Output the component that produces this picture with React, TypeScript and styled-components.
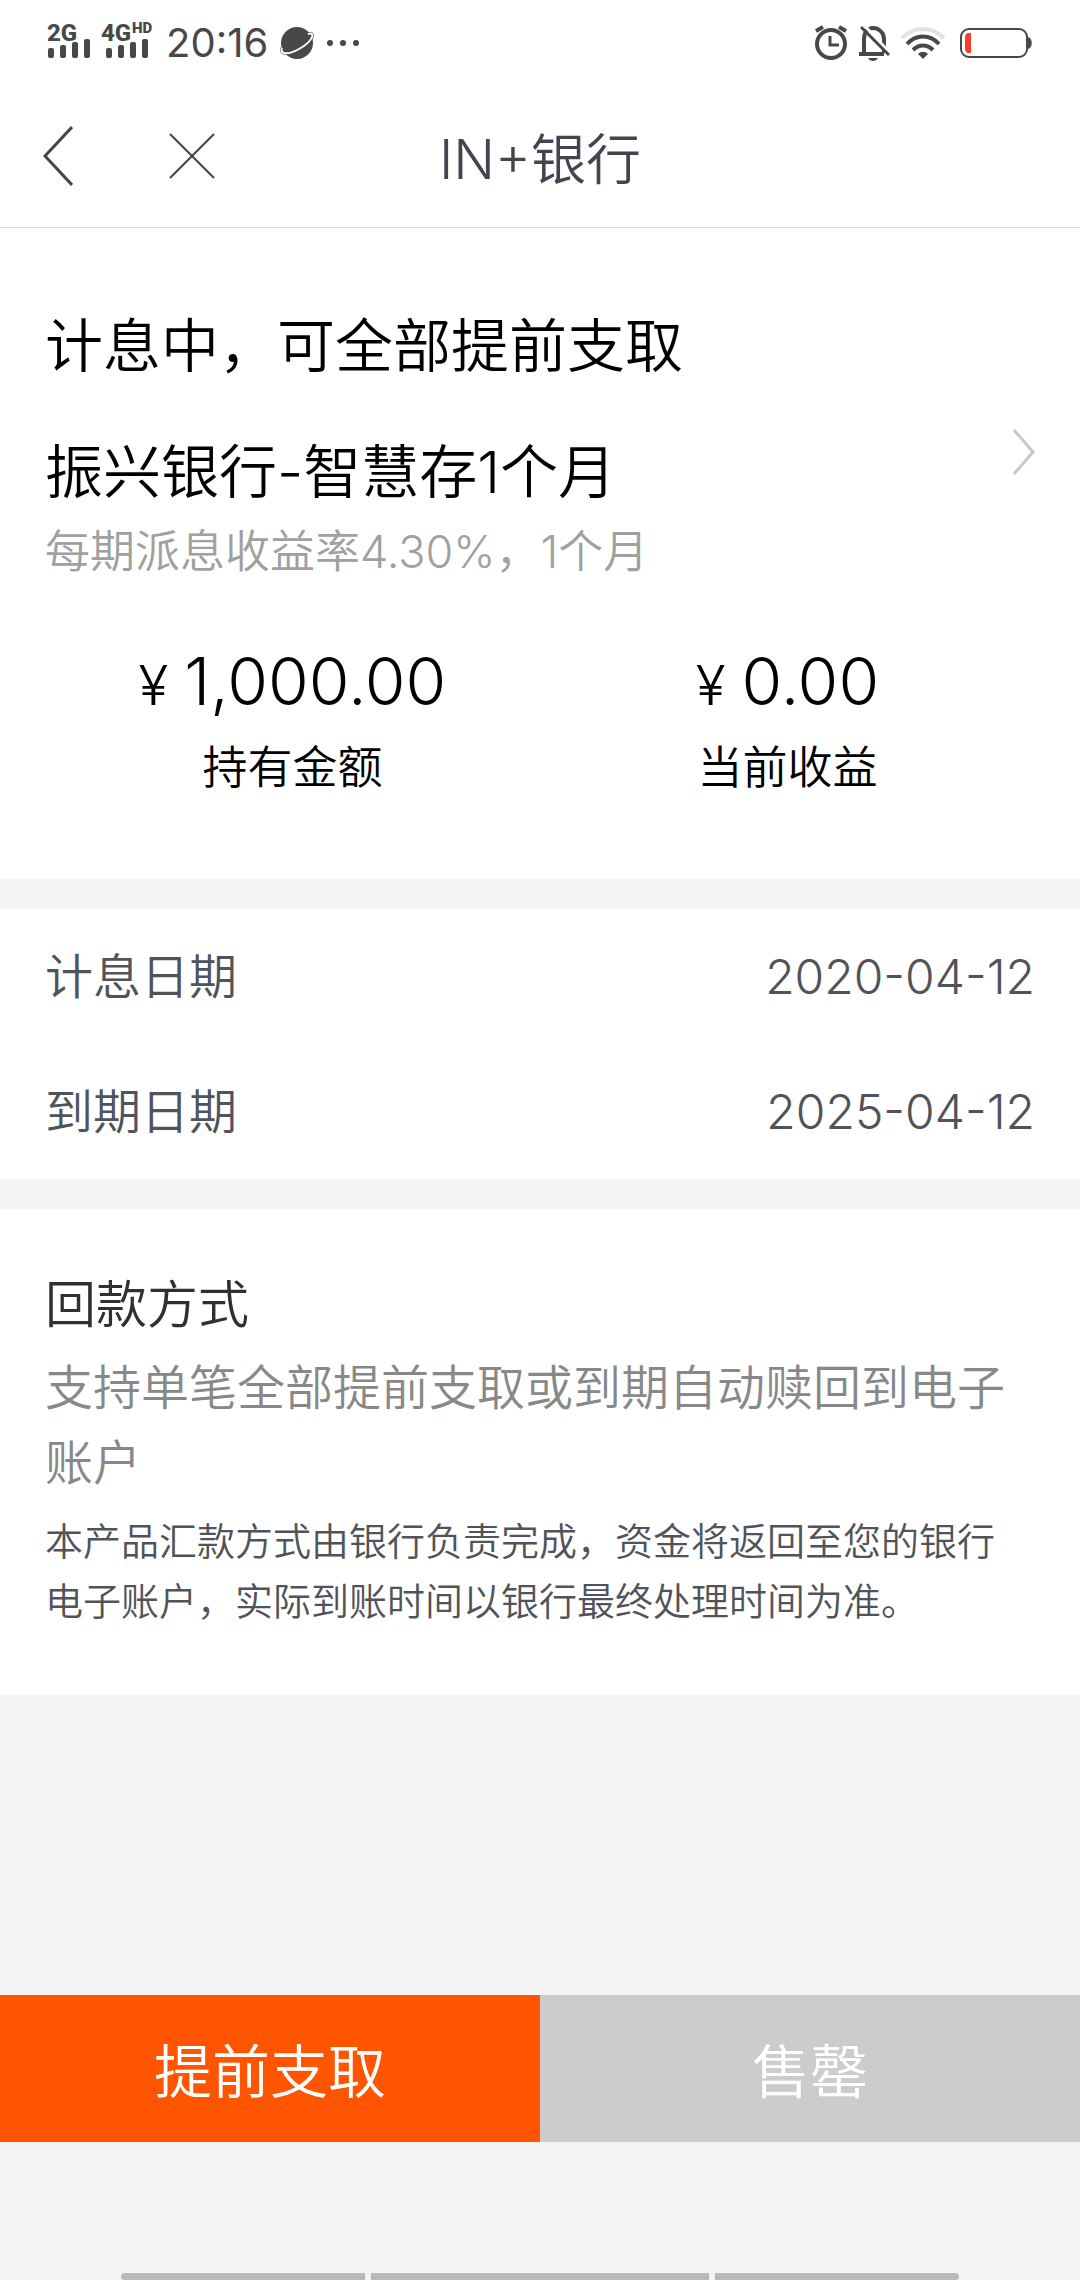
import React from 'react';
import styled, { createGlobalStyle } from 'styled-components';

const GlobalStyle = createGlobalStyle`
  * { box-sizing: border-box; }
  body {
    margin: 0;
    background: #f4f4f4;
    font-family: Inter, "Noto Sans CJK SC", sans-serif;
    font-weight: 350;
  }
  h1, h2, p, dl, dt, dd { margin: 0; font-weight: inherit; }
`;

const Page = styled.div`
  display: flex;
  flex-direction: column;
  min-height: 100vh;
`;

const StatusBar = styled.div`
  display: flex;
  align-items: center;
  justify-content: space-between;
  height: 86px;
  padding: 0 48px;
  background: #fff;
  color: #484848;
`;

const StatusGroup = styled.div<{ $gap: number }>`
  display: flex;
  align-items: center;
  gap: ${(p) => p.$gap}px;
`;

const SignalIcon = styled.svg`
  margin: 0 -2px;
`;

const Clock = styled.time`
  font-size: 40px;
  line-height: 48px;
  font-weight: 400;
`;

const NavBar = styled.header`
  display: grid;
  grid-template-columns: 1fr auto 1fr;
  align-items: center;
  height: 142px;
  padding: 0 43px;
  background: #fff;
  border-bottom: 1px solid #dcdcdc;
  color: #44434f;
`;

const NavActions = styled.div`
  display: flex;
  gap: 96px;
  padding-bottom: 2px;
`;

const IconButton = styled.button`
  display: flex;
  align-items: center;
  padding: 0;
  border: 0;
  background: none;
  color: inherit;
`;

const NavTitle = styled.h1`
  padding-top: 4px;
  font-size: 55px;
  line-height: 84px;
`;

const Content = styled.main`
  display: flex;
  flex-direction: column;
  gap: 30px;
`;

const Card = styled.section`
  padding: 0 45px;
  background: #fff;
`;

const SummaryCard = styled(Card)`
  padding-top: 76px;
  padding-bottom: 81px;
  color: #000;
`;

const ProductLink = styled.a`
  display: flex;
  align-items: center;
  justify-content: space-between;
  color: inherit;
  text-decoration: none;
`;

const ProductText = styled.div`
  padding-bottom: 18px;
`;

const Heading = styled.h2`
  font-size: 58px;
  line-height: 84px;

  & + & { margin-top: 42px; }
`;

const Rate = styled.p`
  margin-top: 8px;
  font-size: 45px;
  line-height: 60px;
  color: #a0a0a0;
`;

const Figures = styled.dl`
  display: flex;
  margin-top: 41px;
`;

const Figure = styled.div`
  display: flex;
  flex: 1;
  flex-direction: column-reverse;
  align-items: center;
  gap: 17px;
`;

const FigureLabel = styled.dt`
  font-size: 45px;
  line-height: 60px;
`;

const FigureValue = styled.dd`
  display: flex;
  align-items: baseline;
  gap: 16px;
  font-size: 66px;
  line-height: 80px;
`;

const Currency = styled.span`
  font-size: 55px;
  line-height: 60px;
`;

const DateRow = styled.div`
  display: flex;
  align-items: center;
  justify-content: space-between;
  height: 135px;
  font-size: 48px;
  line-height: 60px;
  color: #505359;
`;

const RepayCard = styled(Card)`
  padding-top: 58px;
  padding-right: 60px;
  padding-bottom: 64px;
`;

const RepayTitle = styled.h2`
  font-size: 51px;
  line-height: 75px;
  color: #303030;
`;

const RepaySummary = styled.p`
  margin-top: 8px;
  font-size: 48px;
  line-height: 75px;
  color: #888;
`;

const RepayNote = styled.p`
  margin-top: 11px;
  font-size: 38px;
  line-height: 60px;
  color: #505359;
`;

const Actions = styled.div`
  display: flex;
  margin-top: auto;
`;

const ActionButton = styled.button<{ $primary?: boolean }>`
  flex: 1;
  height: 147px;
  padding: 0 0 2px;
  border: 0;
  background: ${(p) => (p.$primary ? '#ff5500' : '#ccc')};
  color: #fff;
  font: inherit;
  font-size: 58px;
`;

const GestureArea = styled.footer`
  display: flex;
  align-items: flex-end;
  justify-content: center;
  gap: 6px;
  height: 138px;
`;

const GestureBar = styled.span<{ $grow: number }>`
  flex: 0 1 ${(p) => p.$grow}px;
  height: 7px;
  background: #bababa;

  &:first-child { border-radius: 4px 0 0 4px; }
  &:last-child { border-radius: 0 4px 4px 0; }
`;

function Signal({ label, badge, offset }: { label: string; badge?: string; offset: number }) {
  const width = badge ? 56 : 46;
  return (
    <SignalIcon width={width} height="50" viewBox={`-2 -6 ${width} 50`} fill="currentColor">
      <text x="-1" y="17" fontFamily="Roboto" fontWeight="800" fontSize="24">{label}</text>
      {badge && (
        <text x="30" y="9" fontFamily="Roboto" fontWeight="900" fontSize="15">{badge}</text>
      )}
      {[10, 13, 16, 19].map((h, i) => (
        <rect key={h} x={offset + i * 12} y={34 - h} width="6" height={h} rx="2" />
      ))}
    </SignalIcon>
  );
}

const PlanetIcon = () => (
  <svg width="34" height="34" viewBox="0 0 34 34">
    <circle cx="17" cy="17" r="16" fill="currentColor" />
    <path d="M28 8c4-1 5 0 4 3-3 8-21 18-28 16-3-1-3-3-2-5" fill="none" stroke="currentColor" strokeWidth="3" />
    <path d="M28 8c4-1 5 0 4 3-3 8-21 18-28 16-3-1-3-3-2-5" fill="none" stroke="#fff" strokeWidth="2" />
  </svg>
);

const DotsIcon = () => (
  <svg width="34" height="8" viewBox="0 0 34 8" fill="currentColor">
    <circle cx="4" cy="4" r="3" />
    <circle cx="17" cy="4" r="3" />
    <circle cx="30" cy="4" r="3" />
  </svg>
);

const AlarmIcon = () => (
  <svg width="34" height="36" viewBox="0 0 34 36" fill="none" stroke="currentColor">
    <circle cx="17" cy="19" r="14" strokeWidth="4" />
    <path d="M16 11v9h9" strokeWidth="3" />
    <path d="M2 6l7-4M32 6l-7-4" strokeWidth="4" />
  </svg>
);

const MutedBellIcon = () => (
  <svg width="32" height="36" viewBox="0 0 32 36" fill="none" stroke="currentColor">
    <path d="M6 28V14c0-7 4-11 9-11s11 4 11 11v14" strokeWidth="4" />
    <path d="M1 29h25" strokeWidth="4" />
    <path d="M10 33h10c-1 2-3 3-5 3s-4-1-5-3z" fill="currentColor" stroke="none" />
    <path d="M6 0l26 28" stroke="#fff" strokeWidth="3" />
    <path d="M3 2l28 28" strokeWidth="3" />
  </svg>
);

const WifiIcon = () => (
  <svg width="50" height="34" viewBox="0 0 50 34" fill="none" stroke="currentColor" strokeWidth="4">
    <path d="M2 12c12-12 30-12 42 0" stroke="#e2e2e2" />
    <path d="M7 18c9-10 23-10 32 0" />
    <path d="M13 24c6-6 14-6 20 0" />
    <path d="M18 28c3-3 7-3 10 0l-5 5z" fill="currentColor" stroke="none" />
  </svg>
);

const BatteryIcon = () => (
  <svg width="72" height="30" viewBox="0 0 72 30">
    <rect x="1" y="1" width="66" height="28" rx="8" fill="none" stroke="currentColor" strokeWidth="2" />
    <path d="M68 9c5 1 5 11 0 12z" fill="currentColor" />
    <path d="M11 5v20H9c-3 0-4-2-4-5V10c0-3 1-5 4-5z" fill="#fb3b2d" />
  </svg>
);

const BackIcon = () => (
  <svg width="30" height="60" viewBox="0 0 30 60" fill="none" stroke="currentColor" strokeWidth="3">
    <path d="M29 1L2 30l27 29" />
  </svg>
);

const CloseIcon = () => (
  <svg width="46" height="46" viewBox="0 0 46 46" fill="none" stroke="currentColor" strokeWidth="2">
    <path d="M1 1l44 44M45 1L1 45" />
  </svg>
);

const MoreIcon = () => (
  <svg width="22" height="46" viewBox="0 0 22 46" fill="none" stroke="#c8c8c8" strokeWidth="3">
    <path d="M1 1l19 22L1 45" />
  </svg>
);

const figures = [
  { label: '持有金额', value: '1,000.00' },
  { label: '当前收益', value: '0.00' },
];

const dates = [
  { label: '计息日期', value: '2020-04-12' },
  { label: '到期日期', value: '2025-04-12' },
];

export default function App() {
  return (
    <Page>
      <GlobalStyle />
      <StatusBar>
        <StatusGroup $gap={12}>
          <Signal label="2G" offset={0} />
          <Signal label="4G" badge="HD" offset={4} />
          <Clock>20:16</Clock>
          <PlanetIcon />
          <DotsIcon />
        </StatusGroup>
        <StatusGroup $gap={10}>
          <AlarmIcon />
          <MutedBellIcon />
          <WifiIcon />
          <BatteryIcon />
        </StatusGroup>
      </StatusBar>

      <NavBar>
        <NavActions>
          <IconButton type="button" aria-label="返回"><BackIcon /></IconButton>
          <IconButton type="button" aria-label="关闭"><CloseIcon /></IconButton>
        </NavActions>
        <NavTitle>IN+银行</NavTitle>
      </NavBar>

      <Content>
        <SummaryCard>
          <ProductLink href="#product">
            <ProductText>
              <Heading>计息中，可全部提前支取</Heading>
              <Heading>振兴银行-智慧存1个月</Heading>
              <Rate>每期派息收益率4.30%，1个月</Rate>
            </ProductText>
            <MoreIcon />
          </ProductLink>
          <Figures>
            {figures.map((f) => (
              <Figure key={f.label}>
                <FigureLabel>{f.label}</FigureLabel>
                <FigureValue><Currency>¥</Currency>{f.value}</FigureValue>
              </Figure>
            ))}
          </Figures>
        </SummaryCard>

        <Card>
          <dl>
            {dates.map((d) => (
              <DateRow key={d.label}>
                <dt>{d.label}</dt>
                <dd>{d.value}</dd>
              </DateRow>
            ))}
          </dl>
        </Card>

        <RepayCard>
          <RepayTitle>回款方式</RepayTitle>
          <RepaySummary>支持单笔全部提前支取或到期自动赎回到电子账户</RepaySummary>
          <RepayNote>
            本产品汇款方式由银行负责完成，资金将返回至您的银行电子账户，实际到账时间以银行最终处理时间为准。
          </RepayNote>
        </RepayCard>
      </Content>

      <Actions>
        <ActionButton type="button" $primary>提前支取</ActionButton>
        <ActionButton type="button" disabled>售罄</ActionButton>
      </Actions>
      <GestureArea>
        <GestureBar $grow={244} />
        <GestureBar $grow={338} />
        <GestureBar $grow={244} />
      </GestureArea>
    </Page>
  );
}
